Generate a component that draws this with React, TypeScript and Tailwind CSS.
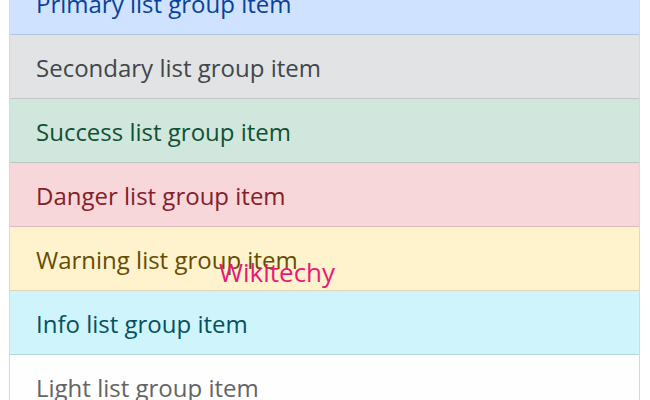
const items = [
  { label: 'Primary list group item', cls: 'bg-[#cfe2ff] text-[#084298]' },
  { label: 'Secondary list group item', cls: 'bg-[#e2e3e5] text-[#41464b]' },
  { label: 'Success list group item', cls: 'bg-[#d1e7dd] text-[#0f5132]' },
  { label: 'Danger list group item', cls: 'bg-[#f8d7da] text-[#842029]' },
  { label: 'Warning list group item', cls: 'bg-[#fff3cd] text-[#664d03]' },
  { label: 'Info list group item', cls: 'bg-[#cff4fc] text-[#055160]' },
  { label: 'Light list group item', cls: 'bg-[#fefefe] text-[#636464]' },
];

export default function App() {
  return (
    <div className="relative h-[400px] w-[650px] overflow-hidden bg-white font-['Open_Sans',sans-serif]">
      <ul className="-mt-[29px] ml-[9px] w-[631px] border-x border-[#d8d8d8]">
        {items.map((item) => (
          <li
            key={item.label}
            className={`flex h-[64px] items-center border-b border-black/[0.125] pl-[26px] pt-[2px] text-[24px] ${item.cls}`}
          >
            {item.label}
          </li>
        ))}
      </ul>
      {/* watermark */}
      <span className="absolute left-[219px] top-[253px] text-[26px] text-[#e8197a]">
        Wikitechy
      </span>
    </div>
  );
}
